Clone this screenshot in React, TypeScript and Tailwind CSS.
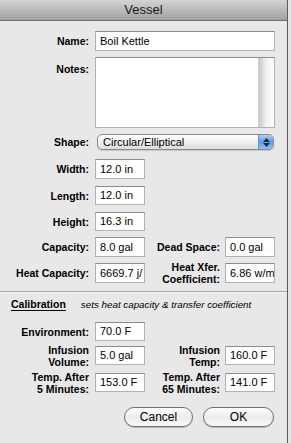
import React from "react";

const font = { fontFamily: '"Liberation Sans", Arial, sans-serif' };

function Field({ value, w = "w-[50px]", h = "h-[20px]" }: { value: string; w?: string; h?: string }) {
  return (
    <div
      className={`${w} ${h} shrink-0 bg-white border border-[#b2b2b2] border-t-[#8c8c8c] overflow-hidden whitespace-nowrap flex items-center pl-[4px] text-[11px] text-black`}
    >
      {value}
    </div>
  );
}

function Label({ children, className = "" }: { children: React.ReactNode; className?: string }) {
  return (
    <div className={`text-right font-bold text-[10.5px] leading-[12px] text-black whitespace-nowrap ${className}`}>{children}</div>
  );
}

function Row({
  label,
  value,
  label2,
  value2,
  className = "",
  h = "h-[20px]",
}: {
  label: React.ReactNode;
  value: string;
  label2?: React.ReactNode;
  value2?: string;
  className?: string;
  h?: string;
}) {
  return (
    <div className={`flex items-center ${h} ${className}`}>
      <Label className="w-[89px] shrink-0">{label}</Label>
      <div className="w-[6px] shrink-0" />
      <Field value={value} h={h} />
      {label2 !== undefined && (
        <>
          <Label className="w-[75px] shrink-0">{label2}</Label>
          <div className="w-[5px] shrink-0" />
          <Field value={value2 ?? ""} h={h} />
        </>
      )}
    </div>
  );
}

export default function App() {
  return (
    <div className="w-[291px] h-[443px] bg-[#e6e6e6] flex" style={font}>
      <div className="w-[288px] h-[443px] bg-[#e8e8e8] border-r border-[#5c5c5c] flex flex-col">
        {/* Title bar */}
        <div className="h-[21px] shrink-0 bg-gradient-to-b from-[#d4d4d4] via-[#bababa] to-[#a0a0a0] border-b border-[#707070] flex items-center justify-center text-[13px] text-[#1a1a1a]">
          Vessel
        </div>

        {/* Name */}
        <div className="flex items-center mt-[10px]">
          <Label className="w-[89px] shrink-0">Name:</Label>
          <div className="w-[6px] shrink-0" />
          <Field value="Boil Kettle" w="w-[180px]" h="h-[20px]" />
        </div>

        {/* Notes */}
        <div className="flex items-start mt-[6px]">
          <Label className="w-[89px] shrink-0 pt-[6px]">Notes:</Label>
          <div className="w-[6px] shrink-0" />
          <div className="w-[180px] h-[71px] bg-white border border-[#b2b2b2] border-t-[#8c8c8c] flex">
            <div className="flex-1" />
            <div className="w-[16px] h-full bg-gradient-to-r from-[#c9c9c9] via-[#f2f2f2] to-[#fdfdfd] border-l border-[#d0d0d0]" />
          </div>
        </div>

        {/* Shape */}
        <div className="flex items-center mt-[6px]">
          <Label className="w-[89px] shrink-0">Shape:</Label>
          <div className="w-[8px] shrink-0" />
          <div className="w-[177px] h-[16px] rounded-[5px] border border-[#8a8a8a] bg-gradient-to-b from-[#ffffff] via-[#f0f0f0] to-[#dcdcdc] flex items-center overflow-hidden shadow-[0_1px_1px_rgba(0,0,0,0.15)]">
            <div className="flex-1 pl-[5px] text-[11px] leading-[14px] text-black">Circular/Elliptical</div>
            <div className="w-[15px] h-full bg-gradient-to-b from-[#a8cdf5] via-[#5d9de6] to-[#8fc1f4] border-l border-[#6b8fbf] flex flex-col items-center justify-center gap-[1px]">
              <svg width="7" height="4" viewBox="0 0 7 4"><path d="M0 4 L3.5 0 L7 4 Z" fill="#1c2a3c" /></svg>
              <svg width="7" height="4" viewBox="0 0 7 4"><path d="M0 0 L3.5 4 L7 0 Z" fill="#1c2a3c" /></svg>
            </div>
          </div>
        </div>

        <Row label="Width:" value="12.0 in" className="mt-[9px]" />
        <Row label="Length:" value="12.0 in" className="mt-[7px]" h="h-[19px]" />
        <Row label="Height:" value="16.3 in" className="mt-[7px]" h="h-[19px]" />
        <Row label="Capacity:" value="8.0 gal" label2="Dead Space:" value2="0.0 gal" className="mt-[6px]" />
        <Row
          label="Heat Capacity:"
          value="6669.7 j/"
          label2={
            <>
              Heat Xfer.
              <br />
              Coefficient:
            </>
          }
          value2="6.86 w/m"
          className="mt-[6px]"
        />

        {/* Separator */}
        <div className="mt-[8px] border-t border-[#a6a6a6] border-b border-b-[#f4f4f4]" />

        <div className="flex items-center mt-[5px] h-[14px]">
          <div className="ml-[11px] font-bold text-[10.5px] underline underline-offset-[2px] text-black">Calibration</div>
          <div className="ml-[15px] italic text-[9.8px] text-black">sets heat capacity &amp; transfer coefficient</div>
        </div>

        <Row label="Environment:" value="70.0 F" className="mt-[10px]" h="h-[19px]" />
        <Row
          label={
            <>
              Infusion
              <br />
              Volume:
            </>
          }
          value="5.0 gal"
          label2={
            <>
              Infusion
              <br />
              Temp:
            </>
          }
          value2="160.0 F"
          className="mt-[5px]"
          h="h-[19px]"
        />
        <Row
          label={
            <>
              Temp. After
              <br />
              5 Minutes:
            </>
          }
          value="153.0 F"
          label2={
            <>
              Temp. After
              <br />
              65 Minutes:
            </>
          }
          value2="141.0 F"
          className="mt-[8px]"
          h="h-[19px]"
        />

        {/* Buttons */}
        <div className="flex justify-end mt-[15px] pr-[13px] gap-[10px]">
          <button className="w-[69px] h-[20px] rounded-full border border-[#6f6f6f] bg-gradient-to-b from-[#ffffff] via-[#ececec] to-[#f8f8f8] text-[12px] text-black shadow-[0_1px_1px_rgba(0,0,0,0.2)]">
            Cancel
          </button>
          <button className="w-[71px] h-[20px] rounded-full border border-[#6f6f6f] bg-gradient-to-b from-[#ffffff] via-[#ececec] to-[#f8f8f8] text-[12px] text-black shadow-[0_1px_1px_rgba(0,0,0,0.2)]">
            OK
          </button>
        </div>
      </div>
    </div>
  );
}
